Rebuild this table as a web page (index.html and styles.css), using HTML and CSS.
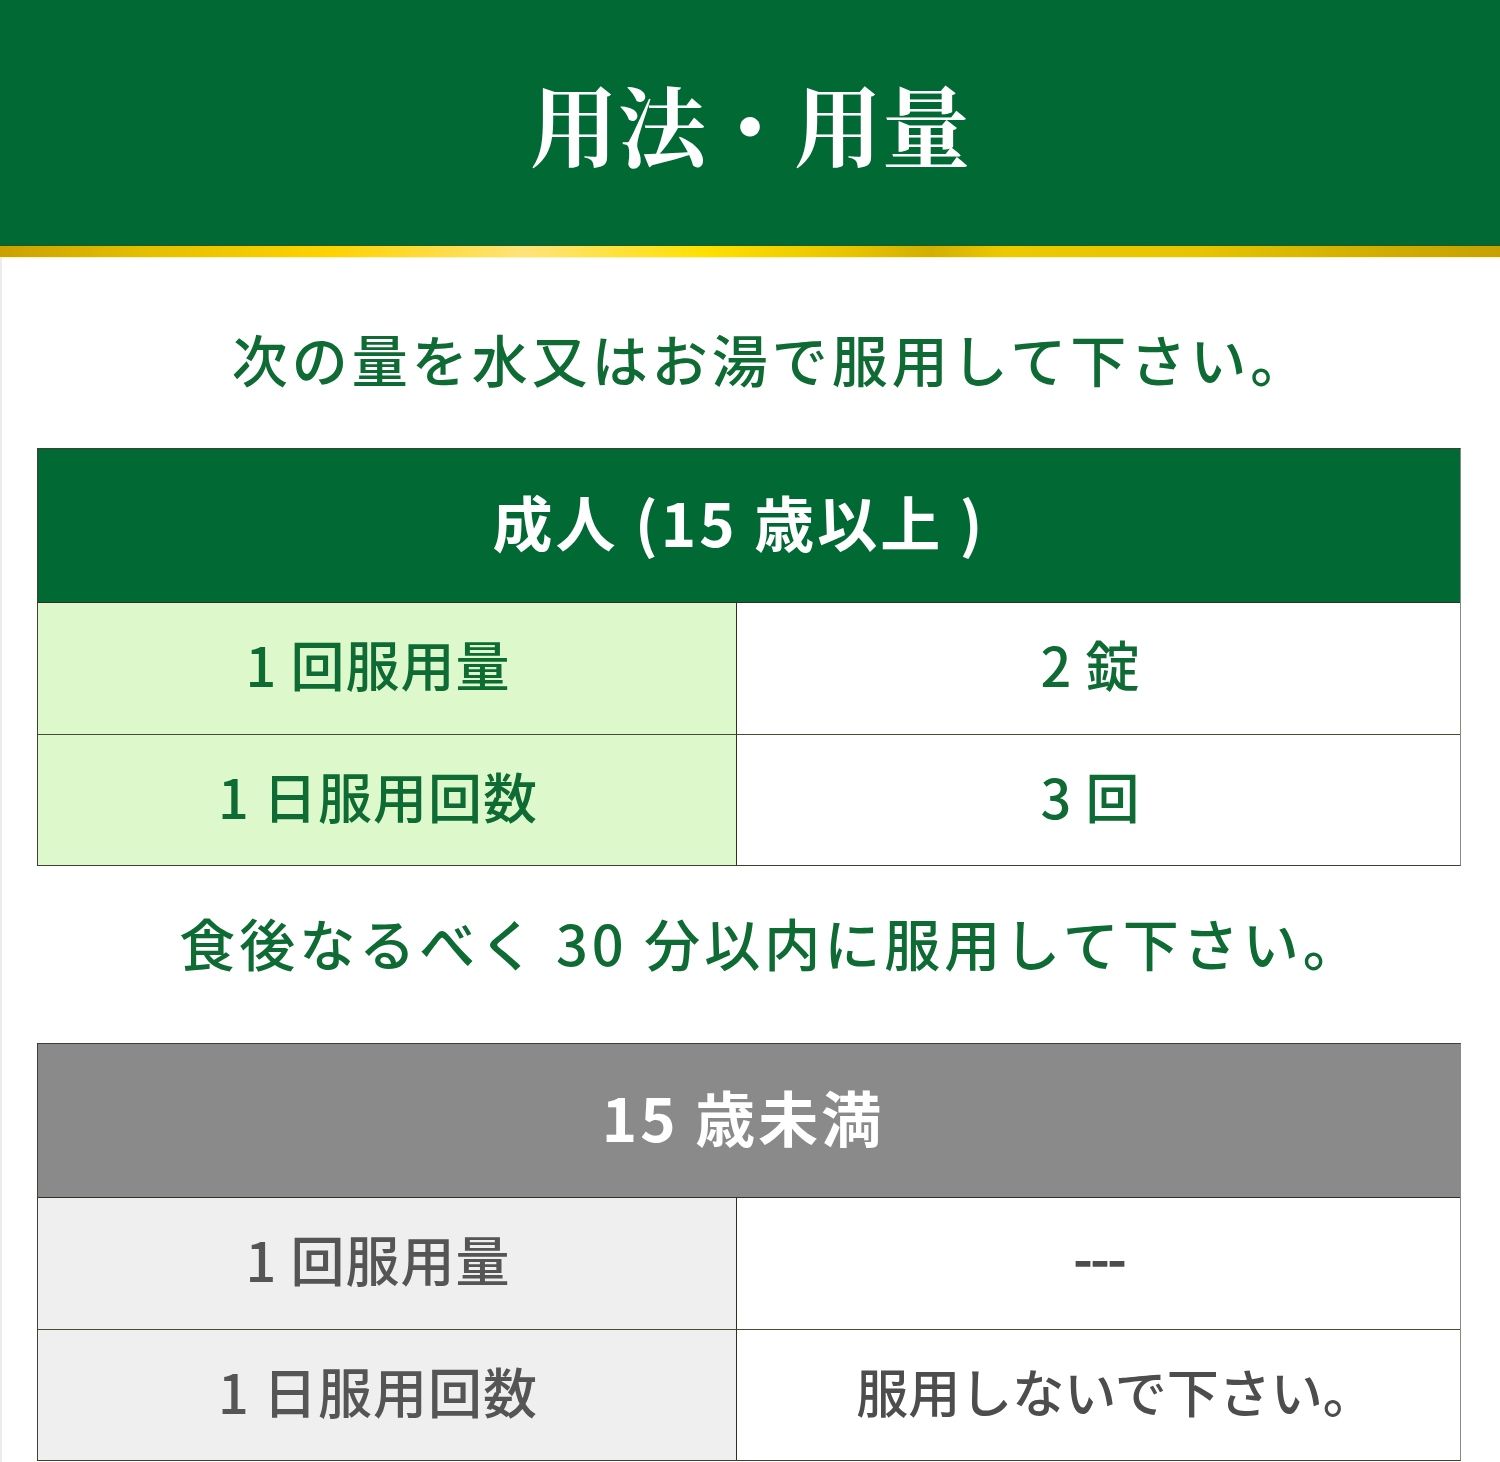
FILE: index.html
```html
<!DOCTYPE html>
<html lang="ja">
<head>
<meta charset="utf-8">
<title>用法・用量</title>
<link rel="stylesheet" href="styles.css">
</head>
<body>
<div class="page">
  <header class="hero">
    <h1 class="hero-title">用法・用量</h1>
  </header>
  <div class="stripe"></div>
  <main class="content">
    <p class="lead lead-1">次の量を水又はお湯で服用して下さい。</p>
    <section class="dose-table adult">
      <div class="dose-head">成人 (15 歳以上 )</div>
      <div class="dose-label">1 回服用量</div>
      <div class="dose-value">2 錠</div>
      <div class="dose-label">1 日服用回数</div>
      <div class="dose-value">3 回</div>
    </section>
    <p class="lead lead-2">食後なるべく 30 分以内に服用して下さい。</p>
    <section class="dose-table child">
      <div class="dose-head">15 歳未満</div>
      <div class="dose-label">1 回服用量</div>
      <div class="dose-value dash">---</div>
      <div class="dose-label">1 日服用回数</div>
      <div class="dose-value note">服用しないで下さい。</div>
    </section>
  </main>
</div>
</body>
</html>
```

FILE: styles.css
```css
* { box-sizing: border-box; }

html, body {
  margin: 0;
  padding: 0;
  background: #ffffff;
}

body {
  font-family: "Noto Sans CJK JP", "Noto Sans", sans-serif;
  width: 1500px;
}

.page {
  width: 1500px;
  height: 1462px;
  display: flex;
  flex-direction: column;
  overflow: hidden;
}

.hero {
  height: 246px;
  background: #006934;
  display: flex;
  align-items: center;
  justify-content: center;
  border-bottom: 1px solid #1d5a20;
}

.hero-title {
  margin: 0;
  font-family: "Noto Serif CJK JP", "Noto Serif CJK SC", "Noto Sans CJK JP", serif;
  font-weight: 700;
  font-size: 88px;
  line-height: 1;
  color: #ffffff;
  letter-spacing: 0;
  padding-bottom: 2px;
}

.stripe {
  height: 12px;
  background: linear-gradient(to right,
    #c9a100 0%,
    #e3bd00 9%,
    #ffd200 22%,
    #ffe37a 35%,
    #ffe000 47%,
    #e6c300 57%,
    #d2ae00 62%,
    #ecca00 67%,
    #e6c400 80%,
    #d4b000 90%,
    #c6a100 100%);
  border-bottom: 1px solid #fff4b8;
}

.content {
  flex: 1;
  display: flex;
  flex-direction: column;
  align-items: center;
  border-left: 2px solid #ececec;
}

.lead {
  margin: 0;
  color: #0e6b34;
  font-weight: 500;
  font-size: 56px;
  line-height: 1;
  letter-spacing: 4px;
  text-align: center;
  width: 100%;
  padding-left: 40px;
}

.lead-1 {
  padding-top: 72px;
  padding-bottom: 62px;
}

.lead-2 {
  padding-top: 48px;
  padding-bottom: 73px;
}

.dose-table {
  width: 1424px;
  margin-left: 35px;
  align-self: flex-start;
  display: grid;
  grid-template-columns: 699px 1fr;
  grid-template-rows: 154px 131px 131px;
  border: 1px solid #3f3f33;
  border-right-color: #8a8a80;
}

.dose-head {
  grid-column: 1 / 3;
  display: flex;
  align-items: center;
  justify-content: center;
  color: #ffffff;
  font-weight: 700;
  font-size: 60px;
  letter-spacing: 3px;
  line-height: 1;
  padding-bottom: 10px;
  padding-right: 12px;
  border-bottom: 1px solid #2f2f22;
}

.adult .dose-head { padding-right: 20px; }

.dose-label,
.dose-value {
  display: flex;
  align-items: center;
  justify-content: center;
  font-weight: 500;
  font-size: 54px;
  line-height: 1;
  letter-spacing: 1px;
  padding-bottom: 9px;
}

.dose-label {
  border-right: 1px solid #2f2f22;
  padding-right: 18px;
}

.dose-label:nth-of-type(4),
.dose-value:nth-of-type(5) {
  border-top: 1px solid #4a4a38;
}

.adult .dose-head { background: #006934; }
.adult .dose-label { background: #ddf8cb; color: #0e6b34; }
.adult .dose-value { background: #ffffff; color: #0e6b34; padding-right: 16px; }

.child .dose-head { background: #8a8a8a; }
.child .dose-label { background: #efefef; color: #555555; }
.child .dose-value { background: #ffffff; color: #4d4d4d; }

.dose-value.dash {
  letter-spacing: -3px;
  font-weight: 700;
  padding-bottom: 16px;
}

.dose-value.note {
  padding-left: 34px;
  letter-spacing: 0;
  font-size: 52px;
}
```
